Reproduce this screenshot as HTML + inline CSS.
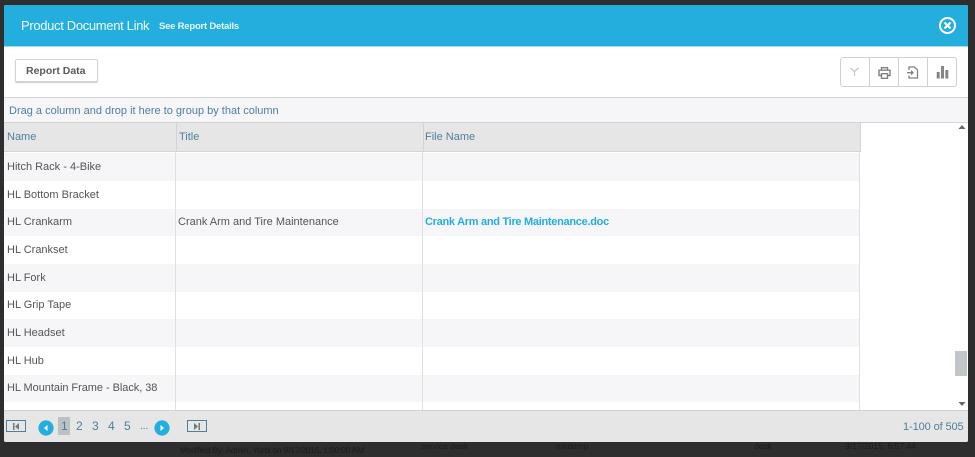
<!DOCTYPE html>
<html>
<head>
<meta charset="utf-8">
<style>
html,body{margin:0;padding:0;width:975px;height:457px;overflow:hidden;background:#2e2e2e;font-family:"Liberation Sans",sans-serif;}
div,span,svg{position:absolute;box-sizing:border-box;}
.t{white-space:nowrap;font-size:11px;line-height:14px;color:#555;}
.d{color:#1c1c1c;font-size:8.5px;}
.row{left:4px;width:856px;height:27.7px;}
.s{background:#f6f6f8;}
.pg{top:419px;font-size:12px;line-height:14px;color:#4f7f9c;white-space:nowrap;}
.ib{top:57px;height:30px;border:1px solid #cfcfcf;background:#fff;}
.nav{top:420px;width:20px;height:12px;border:1px solid #4f7f9c;background:#e6e6e6;}
</style>
</head>
<body>
<span class="t d" style="left:180px;top:443px;letter-spacing:-.25px;">Modified By: Admin, Yurbi on 9/17/2015, 1:00:00 AM</span>
<span class="t d" style="left:421px;top:439px;">service desk</span>
<span class="t d" style="left:556px;top:439px;">mkdemp</span>
<span class="t d" style="left:754px;top:439px;">desk</span>
<span class="t d" style="left:845px;top:439px;">9/17/2015, 8:57:44</span>

<div id="modal" style="left:4px;top:5px;width:964px;height:437px;background:#fff;border-radius:2px;"></div>
<div style="left:4px;top:5px;width:964px;height:41px;background:#23aedd;border-radius:2px 2px 0 0;"></div>
<div style="left:4px;top:46px;width:964px;height:1px;background:#9fd9ee;"></div>
<span class="t" style="left:21px;top:19px;font-size:13px;color:#f2fafd;letter-spacing:-.33px;">Product Document Link</span>
<span class="t" style="left:159px;top:20px;font-size:9.5px;font-weight:bold;color:#e8f6fb;letter-spacing:-.22px;">See Report Details</span>
<svg style="left:938px;top:16px;" width="20" height="20" viewBox="0 0 20 20"><circle cx="9.500" cy="9.500" r="7.500" fill="none" stroke="#fff" stroke-width="2"/><path d="M6.500 6.500l6 6M12.500 6.500l-6 6" stroke="#fff" stroke-width="2.200"/></svg>

<div style="left:15px;top:59px;width:83px;height:23px;border:1px solid #d4d4d4;border-radius:2px;box-shadow:0 1px 1px #ccc;background:#fff;"></div>
<span class="t" style="left:26px;top:64px;font-weight:bold;color:#5a5a5a;font-size:10.500px;">Report Data</span>

<div class="ib" style="left:840px;width:30px;border-radius:3px 0 0 3px;"></div>
<div class="ib" style="left:869px;width:30px;"></div>
<div class="ib" style="left:898px;width:30px;"></div>
<div class="ib" style="left:927px;width:30px;border-radius:0 3px 3px 0;"></div>
<svg style="left:850px;top:67px;" width="9" height="9" viewBox="0 0 9 9"><path d="M.5 1l4 3.500V9M8.500 1l-4 3.500" fill="none" stroke="#c4c4c4" stroke-width="1.200"/></svg>
<svg style="left:878px;top:67px;" width="13" height="12" viewBox="0 0 13 12"><path d="M3.500 3V.7h6V3M3 8.500H1V3.200h11v5.300h-2M3.500 6.700h6v4.600h-6z" fill="none" stroke="#808080" stroke-width="1.400"/></svg>
<svg style="left:907px;top:66px;" width="12" height="13" viewBox="0 0 12 13"><path d="M2 4V1h5.500L10.500 4v8H2V9.500M0 6.700h6M4 4.700l2 2-2 2" fill="none" stroke="#808080" stroke-width="1.300"/></svg>
<svg style="left:936px;top:65px;" width="13" height="14" viewBox="0 0 13 14"><path d="M.7 7h3v6.500h-3zM5 1h3v12.500H5zM9.300 5h3v8.500h-3z" fill="#858585"/></svg>

<div style="left:4px;top:97px;width:964px;height:26px;background:#f6f6f8;border-top:1px solid #d4d4d4;border-bottom:1px solid #d4d4d4;"></div>
<span class="t" style="left:9px;top:104px;color:#4f7f9c;">Drag a column and drop it here to group by that column</span>

<div style="left:4px;top:123px;width:857px;height:29px;background:#e6e6e6;border-bottom:1px solid #d4d4d4;border-right:1px solid #d4d4d4;"></div>
<div style="left:176px;top:123px;width:1px;height:29px;background:#d4d4d4;"></div>
<div style="left:423px;top:123px;width:1px;height:29px;background:#d4d4d4;"></div>
<span class="t" style="left:7px;top:130px;color:#4f7f9c;">Name</span>
<span class="t" style="left:179px;top:130px;color:#4f7f9c;">Title</span>
<span class="t" style="left:425px;top:130px;color:#4f7f9c;">File Name</span>

<div class="row s" style="top:153px;"></div>
<div class="row s" style="top:208.500px;"></div>
<div class="row s" style="top:264px;"></div>
<div class="row s" style="top:319px;"></div>
<div class="row s" style="top:374.500px;"></div>
<div style="left:175px;top:152px;width:1px;height:258px;background:#e0e0e0;"></div>
<div style="left:422px;top:152px;width:1px;height:258px;background:#e0e0e0;"></div>
<div style="left:859px;top:152px;width:1px;height:258px;background:#e0e0e0;"></div>

<span class="t" style="left:7px;top:160px;">Hitch Rack - 4-Bike</span>
<span class="t" style="left:7px;top:188px;">HL Bottom Bracket</span>
<span class="t" style="left:7px;top:215px;">HL Crankarm</span>
<span class="t" style="left:178px;top:215px;">Crank Arm and Tire Maintenance</span>
<span class="t" style="left:425px;top:215px;font-weight:bold;color:#23aedd;letter-spacing:-.29px;">Crank Arm and Tire Maintenance.doc</span>
<span class="t" style="left:7px;top:243px;">HL Crankset</span>
<span class="t" style="left:7px;top:271px;">HL Fork</span>
<span class="t" style="left:7px;top:298px;">HL Grip Tape</span>
<span class="t" style="left:7px;top:326px;">HL Headset</span>
<span class="t" style="left:7px;top:354px;">HL Hub</span>
<span class="t" style="left:7px;top:381px;letter-spacing:-.05px;">HL Mountain Frame - Black, 38</span>

<svg style="left:957px;top:124px;" width="10" height="6" viewBox="0 0 10 6"><path d="M1.500 5L5 1l3.500 4z" fill="#666"/></svg>
<div style="left:955px;top:351px;width:12px;height:25px;background:#c1c7c9;"></div>
<svg style="left:957px;top:401px;" width="10" height="6" viewBox="0 0 10 6"><path d="M1.500 1L5 5l3.500-4z" fill="#666"/></svg>

<div style="left:4px;top:410px;width:964px;height:32px;background:#e6e6e6;border-top:1px solid #d4d4d4;border-radius:0 0 2px 2px;"></div>
<div class="nav" style="left:6px;"></div>
<svg style="left:12px;top:422px;" width="8" height="9" viewBox="0 0 8 9"><path d="M1 1v7h1.500V1zM7 1L3 4.500 7 8z" fill="#777"/></svg>
<svg style="left:38px;top:420px;" width="16" height="16" viewBox="0 0 16 16"><circle cx="8" cy="8" r="7.600" fill="#23aedd"/><path d="M9.500 5L6 8l3.500 3z" fill="#fff"/></svg>
<div style="left:58px;top:417px;width:12px;height:18px;background:#bcc2c4;"></div>
<span class="pg" style="left:61px;">1</span>
<span class="pg" style="left:76px;">2</span>
<span class="pg" style="left:92px;">3</span>
<span class="pg" style="left:108px;">4</span>
<span class="pg" style="left:124px;">5</span>
<span class="pg" style="left:140px;font-size:10px;top:420px;">...</span>
<svg style="left:154px;top:420px;" width="16" height="16" viewBox="0 0 16 16"><circle cx="8" cy="8" r="7.600" fill="#23aedd"/><path d="M6.500 5L10 8l-3.500 3z" fill="#fff"/></svg>
<div class="nav" style="left:187px;"></div>
<svg style="left:193px;top:422px;" width="8" height="9" viewBox="0 0 8 9"><path d="M1 1l4 3.500L1 8zM5.500 1v7H7V1z" fill="#777"/></svg>
<span class="pg" style="left:903px;top:420px;font-size:11px;letter-spacing:-.1px;">1-100 of 505</span>
</body>
</html>
